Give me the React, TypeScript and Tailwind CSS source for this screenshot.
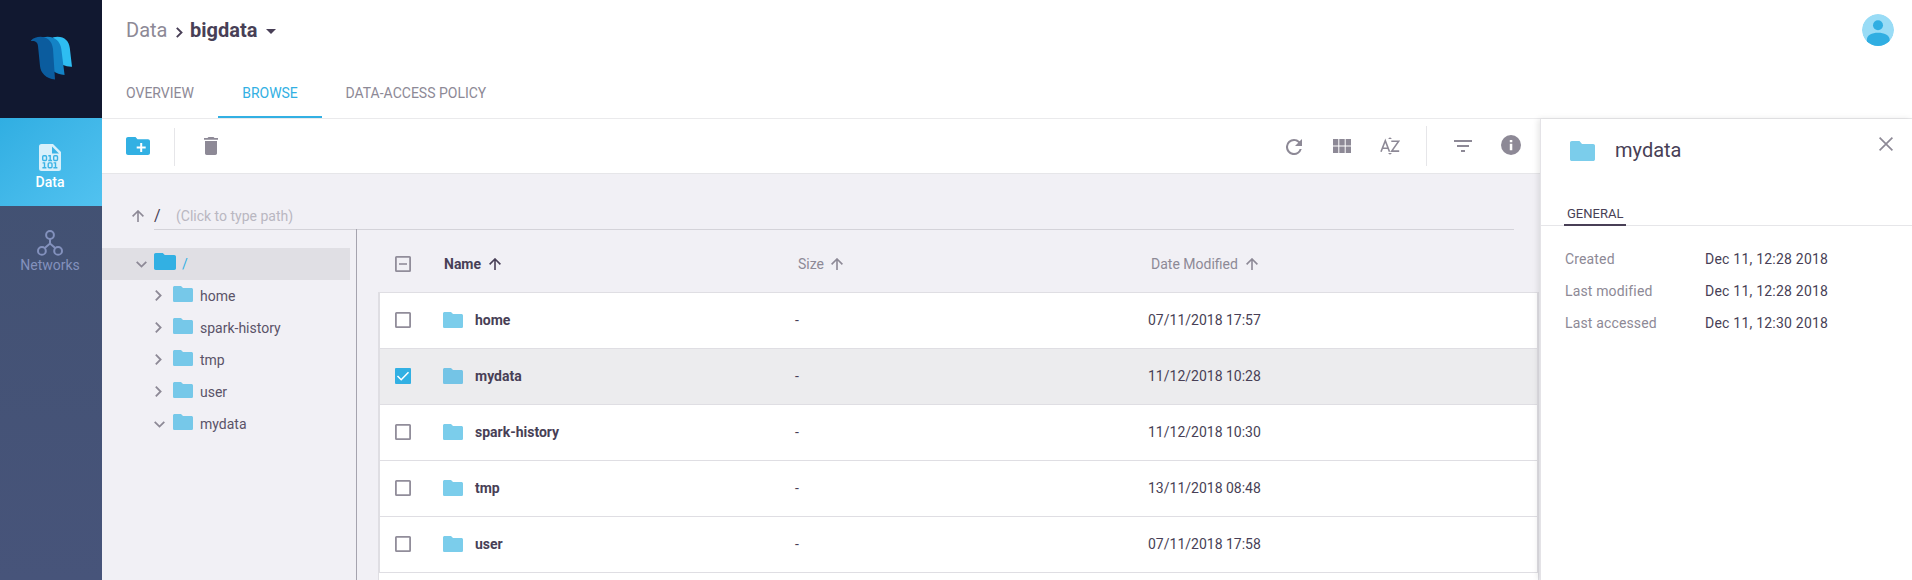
import React from "react";

type IconProps = { className?: string };

const FolderSmall = ({ className = "" }: IconProps) => (
  <svg className={className} viewBox="0 0 20 16" preserveAspectRatio="none">
    <path fill="currentColor" d="M8 0H1.6C.7 0 0 .7 0 1.6v12.8c0 .9.7 1.6 1.6 1.6h16.8c.9 0 1.6-.7 1.6-1.6V3.6c0-.9-.7-1.6-1.6-1.6H10z" />
  </svg>
);

const ArrowUp = ({ className = "" }: IconProps) => (
  <svg className={className} viewBox="0 0 12 12" fill="none" stroke="currentColor" strokeWidth="1.6">
    <path d="M6 12V1.2M.6 6.4 6 1l5.4 5.4" />
  </svg>
);

const ChevronDown = ({ className = "" }: IconProps) => (
  <svg className={className} width="11" height="7" viewBox="0 0 11 7" fill="none" stroke="currentColor" strokeWidth="1.8">
    <path d="m.7.8 4.8 4.8L10.3.8" />
  </svg>
);

const ChevronRight = ({ className = "" }: IconProps) => (
  <svg className={className} width="7" height="11" viewBox="0 0 7 11" fill="none" stroke="currentColor" strokeWidth="1.8">
    <path d="m.8.7 4.8 4.8L.8 10.3" />
  </svg>
);

const Logo = () => (
  <svg width="42" height="44" viewBox="0 0 42 44">
    <path fill="#2ebdf2" d="M22 1.2C32-1 38 4 38.800 12L41 30.800Q36 31 32 29Z" />
    <path fill="#1483c6" d="M12 1.200C22-1 29 4 30.300 13L33.600 39Q27 38.500 22 35Z" />
    <path fill="#0b5c9e" d="M-.5 5C5-1.500 20.500-1.500 22 13L24 43.600C15 42.500 9.600 37 9 30L7 10C6.500 6 4.500 4.500-.5 5Z" />
  </svg>
);

const DataIcon = () => (
  <svg width="22" height="27" viewBox="0 0 22 27">
    <path fill="#d8f0fb" d="M2.500 0H14l8 8v16.500a2.500 2.500 0 0 1-2.500 2.500h-17A2.500 2.500 0 0 1 0 24.500v-22A2.500 2.500 0 0 1 2.500 0Z" />
    <path fill="#3bb3e5" d="M13 2.500v7h7z" />
    <g fill="none" stroke="#3bb3e5" strokeWidth="1.400">
      <rect x="3.700" y="11.700" width="3.800" height="4.800" rx="1" />
      <path d="M9.300 11.700h1.900v5.400M9.300 16.500h3.800" />
      <rect x="14.700" y="11.700" width="3.800" height="4.800" rx="1" />
      <path d="M3.600 18.900h1.900v4.800M3.400 23.700h4" />
      <rect x="9.200" y="18.900" width="3.800" height="4.800" rx="1" />
      <path d="M14.600 18.900h1.900v4.800M14.400 23.700h4" />
    </g>
  </svg>
);

const NetworkIcon = () => (
  <svg width="26" height="26" viewBox="0 0 26 26" fill="none" stroke="#8391bd" strokeWidth="2">
    <circle cx="13" cy="5" r="3.900" />
    <circle cx="4.900" cy="20.900" r="3.900" />
    <circle cx="21.100" cy="20.900" r="3.900" />
    <path d="M13 9v5M7.800 18 13 13.500 18.200 18" />
  </svg>
);

const Checkbox = ({ state }: { state: "off" | "on" | "mixed" }) => (
  <svg width="16" height="16" viewBox="0 0 16 16" className="shrink-0">
    {state === "on" ? (
      <>
        <rect width="16" height="16" rx="1" fill="#32b0e3" />
        <path d="m2.500 8 3.700 3.700L13.500 4.200" fill="none" stroke="#fff" strokeWidth="1.500" />
      </>
    ) : (
      <>
        <rect x=".9" y=".9" width="14.200" height="14.200" rx=".6" fill="none" stroke="#918d9a" strokeWidth="1.800" />
        {state === "mixed" && <path d="M4 8h8" stroke="#918d9a" strokeWidth="1.600" />}
      </>
    )}
  </svg>
);

const tree = [
  { name: "home", open: false },
  { name: "spark-history", open: false },
  { name: "tmp", open: false },
  { name: "user", open: false },
  { name: "mydata", open: true },
];

const rows = [
  { name: "home", date: "07/11/2018 17:57", selected: false },
  { name: "mydata", date: "11/12/2018 10:28", selected: true },
  { name: "spark-history", date: "11/12/2018 10:30", selected: false },
  { name: "tmp", date: "13/11/2018 08:48", selected: false },
  { name: "user", date: "07/11/2018 17:58", selected: false },
];

const details = [
  ["Created", "Dec 11, 12:28 2018"],
  ["Last modified", "Dec 11, 12:28 2018"],
  ["Last accessed", "Dec 11, 12:30 2018"],
];

function Sidebar() {
  return (
    <nav className="flex w-[102px] shrink-0 flex-col bg-linear-to-b from-[#40506f] to-[#47547a]">
      <div className="flex h-[118px] bg-[#111830] pt-[36px] pl-[31px]">
        <Logo />
      </div>
      <div className="flex h-[88px] flex-col items-center bg-linear-to-br from-[#30aee2] to-[#51c2f0] pt-[26px] pr-[2px] text-white">
        <DataIcon />
        <span className="mt-[1px] text-[14px] leading-5 font-medium">Data</span>
      </div>
      <div className="flex flex-col items-center pt-[24px] pr-[2px] text-[#8391bd]">
        <NetworkIcon />
        <span className="-mt-px text-[14px] leading-5">Networks</span>
      </div>
    </nav>
  );
}

function Header() {
  return (
    <header className="flex h-[119px] shrink-0 flex-col justify-between border-b border-[#eaeaec] bg-white">
      <div className="flex items-start justify-between pt-[14px] pr-[18px] pl-[24px]">
        <div className="flex items-center pt-[2px] text-[20px] leading-7">
          <span className="w-[50px] text-[#8d8996]">Data</span>
          <svg width="7" height="11" viewBox="0 0 7 11" className="mt-[4px] mr-[7px]" fill="none" stroke="#483f56" strokeWidth="1.900">
            <path d="m.8.8 4.700 4.700L.8 10.200" />
          </svg>
          <span className="font-bold text-[#483f56]">bigdata</span>
          <svg width="10" height="5" viewBox="0 0 10 5" className="mt-[2px] ml-[9px]">
            <path fill="#483f56" d="M0 0h10L5 5z" />
          </svg>
        </div>
        <svg width="32" height="32" viewBox="0 0 32 32">
          <defs>
            <clipPath id="avatar">
              <circle cx="16" cy="16" r="16" />
            </clipPath>
          </defs>
          <g clipPath="url(#avatar)">
            <circle cx="16" cy="16" r="16" fill="#99dcf6" />
            <circle cx="16" cy="11.300" r="5" fill="#30aee2" />
            <path fill="#30aee2" d="M4.800 26c0-5 5.200-7.300 11.200-7.300S27.700 21 27.700 26v6H4.800z" />
          </g>
        </svg>
      </div>
      <div className="flex h-[50px] text-[14px] leading-5 text-[#8d8996]">
        <div className="w-[116px] pt-[15px] pl-[24px]">OVERVIEW</div>
        <div className="w-[104px] border-b-2 border-[#32b0e3] pt-[15px] text-center text-[#32b0e3]">BROWSE</div>
        <div className="pt-[15px] pl-[23.500px]">DATA-ACCESS POLICY</div>
      </div>
    </header>
  );
}

function Toolbar() {
  return (
    <div className="flex h-[55px] shrink-0 items-start border-b border-[#e6e6e9] bg-white pl-[24px] text-[#8d8996]">
      <svg width="24" height="18" viewBox="0 0 24 18" className="mt-[18px]">
        <path fill="#32b0e3" d="M9.500 0H2C.9 0 0 .9 0 2v14c0 1.100.9 2 2 2h20c1.100 0 2-.9 2-2V4.200c0-1.100-.9-2-2-2H11.500z" />
        <path d="M15.200 6v9M10.700 10.500h9" stroke="#fff" strokeWidth="2" />
      </svg>
      <div className="mt-[9px] ml-[24px] h-[38px] w-px bg-[#e6e6e9]" />
      <svg width="14" height="18" viewBox="0 0 14 18" className="mt-[18px] ml-[29px]" fill="currentColor">
        <path d="M0 1h3.500l1-1h5l1 1H14v1.800H0zM1 4h12v12.300c0 1-.7 1.700-1.700 1.700H2.700C1.700 18 1 17.300 1 16.300z" />
      </svg>
      <svg width="16" height="16" viewBox="4 4 16 16" className="mt-[20px] ml-auto" fill="currentColor">
        <path d="M17.650 6.350A7.958 7.958 0 0 0 12 4a8 8 0 1 0 7.730 10h-2.080A5.990 5.990 0 0 1 12 18a6 6 0 1 1 0-12c1.660 0 3.140.690 4.220 1.780L13 11h7V4z" />
      </svg>
      <svg width="18" height="14" viewBox="0 0 18 14" className="mt-[20px] ml-[31px]" fill="currentColor">
        <path d="M0 0h5.300v6.500H0zM6.300 0h5.400v6.500H6.300zM12.700 0H18v6.500h-5.300zM0 7.500h5.300V14H0zM6.300 7.500h5.400V14H6.300zM12.700 7.500H18V14h-5.300z" />
      </svg>
      <svg width="20" height="18" viewBox="0 0 20 18" className="mt-[18px] ml-[29px]" fill="none" stroke="currentColor" strokeWidth="1.600">
        <path d="M1 14.800 5.300 3.700 9.500 14.800M2.600 11.200H8M11.300 4.200H18.700L11.700 14.100H19.200" />
        <path d="M8 2 10 .2 12 2zM8 16l2 1.800L12 16z" fill="currentColor" stroke="none" />
      </svg>
      <div className="mt-[7px] ml-[26px] h-[40px] w-px bg-[#e6e6e9]" />
      <svg width="18" height="12" viewBox="0 0 18 12" className="mt-[21px] ml-[27px]" fill="currentColor">
        <path d="M0 0h18v2H0zM3 5h12v2H3zM7 10h4v2H7z" />
      </svg>
      <svg width="20" height="20" viewBox="0 0 20 20" className="mt-[16px] mr-[19px] ml-[29px]">
        <circle cx="10" cy="10" r="10" fill="currentColor" />
        <path fill="#fff" d="M8.800 5h2.500v2.300H8.800zM8.800 8.700h2.500v6.500H8.800z" />
      </svg>
    </div>
  );
}

function PathBar() {
  return (
    <div className="flex h-[56px] shrink-0 pr-[26px] pl-[30px] text-[14px] leading-5">
      <ArrowUp className="mt-[36px] h-[12px] w-[12px] text-[#8d8996]" />
      <div className="ml-[10px] flex flex-1 border-b border-[#d4d3d9] pt-[32px]">
        <span className="w-[22px] text-[16px] text-[#483f56]">/</span>
        <span className="text-[#b9b7c1]">(Click to type path)</span>
      </div>
    </div>
  );
}

function Tree() {
  return (
    <div className="w-[255px] shrink-0 border-r border-[#a5a3ae] pt-[19px] text-[14px] leading-5 text-[#5a5368]">
      <div className="flex h-[32px] w-[248px] bg-[#e0dfe4] pl-[34px]">
        <ChevronDown className="mt-[13px] text-[#8d8996]" />
        <FolderSmall className="mt-[5px] ml-[7px] h-[17px] w-[22px] text-[#32b0e3]" />
        <span className="mt-[6px] ml-[6px] text-[#32b0e3]">/</span>
      </div>
      {tree.map((node) => (
        <div key={node.name} className="flex h-[32px] pl-[52px]">
          <div className="w-[19px] shrink-0">
            {node.open ? <ChevronDown className="mt-[13px] text-[#8d8996]" /> : <ChevronRight className="mt-[10px] ml-[1px] text-[#8d8996]" />}
          </div>
          <FolderSmall className="mt-[6px] h-[16px] w-[20px] text-[#76c8e9]" />
          <span className="mt-[6px] ml-[7px]">{node.name}</span>
        </div>
      ))}
    </div>
  );
}

function FileTable() {
  return (
    <div className="mr-px ml-[21px] flex flex-1 flex-col text-[14px] leading-5">
      <div className="flex h-[63px] shrink-0 items-center pb-px pl-[17px] text-[#8d8996]">
        <div className="w-[49px] pt-[8px]">
          <Checkbox state="mixed" />
        </div>
        <div className="flex w-[354px] items-center pt-[8px] font-bold text-[#483f56]">
          Name
          <ArrowUp className="ml-[8px] h-[12px] w-[12px]" />
        </div>
        <div className="flex w-[353px] items-center pt-[8px]">
          Size
          <ArrowUp className="ml-[7px] h-[12px] w-[12px]" />
        </div>
        <div className="flex items-center pt-[8px]">
          Date Modified
          <ArrowUp className="ml-[8px] h-[12px] w-[12px]" />
        </div>
      </div>
      <div className="flex-1 border-x border-[#dfdee3] bg-white">
        <div className="border-x border-t border-[#dfdee3]">
          {rows.map((row) => (
            <div
              key={row.name}
              className={`flex h-[56px] items-center border-b border-[#dfdee3] pb-px pl-[15px] text-[#483f56] ${row.selected ? "bg-[#ececee]" : "bg-white"}`}
            >
              <div className="w-[48px]">
                <Checkbox state={row.selected ? "on" : "off"} />
              </div>
              <FolderSmall className={`h-[16px] w-[20px] ${row.selected ? "text-[#74c4e6]" : "text-[#7bcdeb]"}`} />
              <div className="ml-[12px] w-[320px] font-bold">{row.name}</div>
              <div className="w-[353px]">-</div>
              <div>{row.date}</div>
            </div>
          ))}
        </div>
      </div>
    </div>
  );
}

function DetailsPanel() {
  return (
    <aside className="relative w-[372px] shrink-0 border-l border-[#e4e3e7] bg-white text-[14px] leading-5 shadow-[-2px_0_6px_rgba(0,0,0,0.1)]">
      <div className="flex h-[107px] flex-col justify-between border-b border-[#e6e6e9]">
        <div className="flex items-start pl-[29px]">
          <svg width="25" height="20" viewBox="0 0 25 20" className="mt-[22px]">
            <path fill="#7bcdeb" d="M9.500 0H1.800C.8 0 0 .8 0 1.800v16.400c0 1 .8 1.800 1.800 1.800h21.400c1 0 1.800-.8 1.800-1.800V4.800c0-1-.8-1.800-1.800-1.800H12z" />
          </svg>
          <span className="mt-[17px] ml-[20px] text-[20px] leading-7 text-[#483f56]">mydata</span>
          <svg width="14" height="14" viewBox="0 0 14 14" className="mt-[18px] mr-[19px] ml-auto" fill="none" stroke="#8d8996" strokeWidth="1.700">
            <path d="m.6.6 12.800 12.800M13.400.6.600 13.400" />
          </svg>
        </div>
        <div className="-mb-px ml-[23px] h-[22px] w-[62px] border-b-2 border-[#483f56] pl-[3px] text-[13px] text-[#483f56]">GENERAL</div>
      </div>
      <dl className="pt-[23px] pl-[24px]">
        {details.map(([label, value]) => (
          <div key={label} className="flex h-[32px]">
            <dt className="w-[140px] tracking-[0.15px] text-[#8d8996]">{label}</dt>
            <dd className="tracking-[0.22px] text-[#483f56]">{value}</dd>
          </div>
        ))}
      </dl>
    </aside>
  );
}

export default function App() {
  return (
    <div className="flex h-[580px] w-[1912px] overflow-hidden bg-white font-[Roboto,sans-serif]">
      <Sidebar />
      <div className="flex min-w-0 flex-1 flex-col">
        <Header />
        <div className="flex min-h-0 flex-1">
          <main className="flex min-w-0 flex-1 flex-col bg-[#f1f0f5]">
            <Toolbar />
            <PathBar />
            <div className="-mt-px flex min-h-0 flex-1">
              <Tree />
              <FileTable />
            </div>
          </main>
          <DetailsPanel />
        </div>
      </div>
    </div>
  );
}
